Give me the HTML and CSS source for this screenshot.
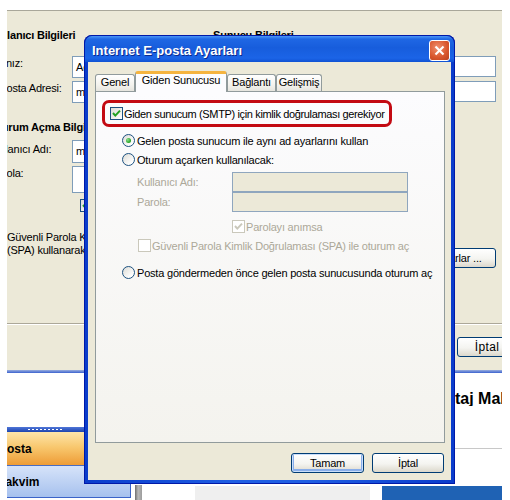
FILE: index.html
```html
<!DOCTYPE html>
<html lang="tr">
<head>
<meta charset="utf-8">
<title>Internet E-posta Ayarları</title>
<link rel="stylesheet" href="styles.css">
</head>
<body>
<div class="screen">
  <div class="acct">
    <div class="acct-main">
      <div class="col-left">
        <div class="group-title">Kullanıcı Bilgileri</div>
        <div class="field f1"><span class="lbl">Adınız:</span><span class="inp">Ad Soyad</span></div>
        <div class="field f2"><span class="lbl">E-posta Adresi:</span><span class="inp">mail@ornek.com</span></div>
        <div class="group-title g2">Oturum Açma Bilgileri</div>
        <div class="field f3"><span class="lbl">Kullanıcı Adı:</span><span class="inp">mail</span></div>
        <div class="field f4"><span class="lbl">Parola:</span><span class="inp"></span></div>
        <div class="remember"><span class="cb"><svg viewBox="0 0 11 11"><polyline points="2,5 4.3,7.6 9,2.6"/></svg></span>Parolayı anımsa</div>
        <div class="spa">Güvenli Parola Kimlik Doğrulaması<br>(SPA) kullanarak oturum açmayı gerektir</div>
      </div>
      <div class="col-right">
        <div class="group-title">Sunucu Bilgileri</div>
        <div class="rinp r1"></div>
        <div class="rinp r2"></div>
        <div class="xpbtn more">Diğer Ayarlar ...</div>
      </div>
    </div>
    <div class="acct-sep"></div>
    <div class="acct-foot"><div class="xpbtn cancel-bg">İptal</div></div>
  </div>
  <div class="band"></div>
  <div class="lower">
    <div class="nav">
      <div class="nav-grip"><span class="dots"></span></div>
      <div class="nav-item posta"><span>Posta</span></div>
      <div class="nav-item takvim"><span>Takvim</span></div>
    </div>
    <div class="sb"></div>
    <div class="reading">
      <div class="rhead">taj Mahallesi</div>
      <div class="rline"></div>
      <div class="tiles"><div class="tile1"></div><div class="tile2"></div></div>
    </div>
  </div>

  <div class="dialog">
    <div class="titlebar">
      <div class="title">Internet E-posta Ayarları</div>
      <div class="close"><svg viewBox="0 0 11 11"><line x1="1.5" y1="1.5" x2="9.5" y2="9.5"/><line x1="9.5" y1="1.5" x2="1.5" y2="9.5"/></svg></div>
    </div>
    <div class="dbody">
      <div class="tabs">
        <div class="tab t1">Genel</div>
        <div class="tab sel t2">Giden Sunucusu</div>
        <div class="tab t3">Bağlantı</div>
        <div class="tab t4">Gelişmiş</div>
      </div>
      <div class="panel">
        <div class="hl">
          <span class="cb"><svg viewBox="0 0 11 11"><polyline points="2,5 4.3,7.6 9,2.6"/></svg></span>
          <span class="hl-text">Giden sunucum (SMTP) için kimlik doğrulaması gerekiyor</span>
        </div>
        <div class="opt o1"><span class="rb on"></span><span class="opt-text">Gelen posta sunucum ile aynı ad ayarlarını kullan</span></div>
        <div class="opt"><span class="rb"></span><span class="opt-text">Oturum açarken kullanılacak:</span></div>
        <div class="creds">
          <span>Kullanıcı Adı:</span><span class="dinp"></span>
          <span>Parola:</span><span class="dinp"></span>
        </div>
        <div class="dopt d1"><span class="cb dis"><svg viewBox="0 0 11 11"><polyline points="2,5 4.3,7.6 9,2.6"/></svg></span><span class="opt-text">Parolayı anımsa</span></div>
        <div class="dopt d2"><span class="cb dis"></span><span class="opt-text">Güvenli Parola Kimlik Doğrulaması (SPA) ile oturum aç</span></div>
        <div class="opt o3"><span class="rb"></span><span class="opt-text">Posta göndermeden önce gelen posta sunucusunda oturum aç</span></div>
      </div>
      <div class="dbuttons">
        <div class="xpbtn def">Tamam</div>
        <div class="xpbtn">İptal</div>
      </div>
    </div>
  </div>
</div>
</body>
</html>
```

FILE: styles.css
```css
body {
  margin: 0;
  background: #fff;
  font-family: "Liberation Sans", Arial, sans-serif;
  font-size: 11px;
  letter-spacing: -0.2px;
  color: #000;
}
.screen {
  position: relative;
  width: 510px;
  height: 500px;
  overflow: hidden;
}

/* ---------- background account window ---------- */
.acct {
  box-sizing: border-box;
  margin: 10px 8px 0 7px;
  height: 360px;
  border-top: 1px solid #A9A79A;
  background: #ECE9D8;
  overflow: hidden;
  display: flex;
  flex-direction: column;
}
.acct-main {
  height: 312px;
  display: grid;
  grid-template-columns: 206px 1fr;
}
.col-left {
  margin-left: -17px;
  padding-top: 17px;
}
.group-title {
  font-weight: bold;
  line-height: 14px;
  white-space: nowrap;
}
.field {
  display: grid;
  grid-template-columns: 82px 128px;
  align-items: start;
  line-height: 14px;
  white-space: nowrap;
}
.f1 { margin-top: 14px; }
.f2 { margin-top: 3px; }
.g2 { margin-top: 17px; }
.f3 { margin-top: 6px; }
.f3 .lbl { padding-top: 2px; }
.f4 { margin-top: 3px; }
.inp {
  box-sizing: border-box;
  height: 22px;
  border: 1px solid #7F9DB9;
  background: #fff;
  padding: 3px;
  overflow: hidden;
}
.f3 .inp { height: 23px; }
.f4 .inp { height: 27px; }
.remember {
  margin: 6px 0 0 90px;
  display: flex;
  align-items: center;
  gap: 3px;
  height: 13px;
  white-space: nowrap;
}
.spa {
  margin: 19px 0 0 17px;
  line-height: 13px;
  white-space: nowrap;
}
.col-right { padding-top: 17px; white-space: nowrap; }
.rinp {
  box-sizing: border-box;
  margin-left: 127px;
  width: 156px;
  height: 21px;
  border: 1px solid #7F9DB9;
  background: #fff;
}
.r1 { margin-top: 14px; }
.r2 { margin-top: 4px; }
.more {
  margin: 146px 0 0 182px;
  width: 101px;
}
.acct-sep {
  border-top: 1px solid #ACA899;
  border-bottom: 1px solid #fff;
}
.acct-foot {
  display: flex;
  justify-content: flex-end;
  padding-top: 12px;
}
.cancel-bg {
  width: 60px;
  margin-right: -15px;
  font-size: 12px;
  letter-spacing: 0.4px;
}
.band {
  margin: 0 8px 0 7px;
  height: 3px;
  background: linear-gradient(#9AAEDD, #3B62CF);
}

/* XP buttons */
.xpbtn {
  box-sizing: border-box;
  height: 20px;
  border: 1px solid #003C74;
  border-radius: 3px;
  background: linear-gradient(#FFFFFF, #F4F4F0 55%, #DCD8CC);
  display: flex;
  align-items: center;
  justify-content: center;
  white-space: nowrap;
  line-height: 14px;
}

/* ---------- lower Outlook area ---------- */
.lower {
  display: flex;
  height: 127px;
  margin-right: 8px;
}
.nav {
  margin-left: 7px;
  width: 124px;
  padding-top: 54px;
  overflow: hidden;
  flex: none;
}
.nav-grip {
  height: 5px;
  background: linear-gradient(#4F76D8, #1D44AE);
  display: flex;
  align-items: center;
}
.dots {
  margin-left: 21px;
  width: 36px;
  height: 1px;
  background: repeating-linear-gradient(90deg, #fff 0 2px, transparent 2px 4px);
}
.nav-item {
  display: flex;
  align-items: center;
  font-weight: bold;
  font-size: 12px;
  letter-spacing: 0;
  white-space: nowrap;
}
.nav-item span { margin-left: -8px; }
.posta {
  height: 33px;
  background: linear-gradient(#FDE5AA, #F8C86F 45%, #EE9C36);
  border-bottom: 1px solid #4A6CC0;
}
.takvim {
  height: 31px;
  background: linear-gradient(#D6E3F9, #A6C1EE);
  border-right: 1px solid #3A63C8;
  border-bottom: 1px solid #3A63C8;
}
.sb {
  margin: 112px 0 0 4px;
  width: 7px;
  background: linear-gradient(90deg, #6E6E6E, #B8B8B8 45%, #9C9C9C);
  flex: none;
}
.reading {
  flex: 1;
  display: flex;
  flex-direction: column;
  min-width: 0;
}
.rhead {
  margin: 18px 0 0 313px;
  font-weight: bold;
  font-size: 16px;
  line-height: 16px;
  letter-spacing: 0;
  white-space: nowrap;
  overflow: hidden;
}
.rline {
  margin: 42px 0 0 313px;
  border-top: 1px solid #C8C8C8;
}
.tiles {
  display: flex;
  margin-top: 37px;
  height: 14px;
}
.tile1 {
  margin-left: 53px;
  width: 175px;
  background: #EFEFEF;
}
.tile2 {
  margin-left: 12px;
  flex: 1;
  background: #1F62B4;
}

/* ---------- dialog ---------- */
.dialog {
  position: absolute;
  left: 84px;
  top: 35px;
  width: 371px;
  height: 449px;
  box-sizing: border-box;
  border: 1px solid #0019A8;
  border-top: none;
  border-radius: 8px 8px 0 0;
  background: linear-gradient(90deg, #0A3CCB, #1F5EE3 40%, #1F5EE3 60%, #0A3CCB);
  padding: 0 3px 3px;
  display: flex;
  flex-direction: column;
}
.titlebar {
  box-sizing: border-box;
  height: 27px;
  margin: 0 -4px;
  border-radius: 8px 8px 0 0;
  border: 1px solid #0019A8;
  border-bottom: none;
  background: linear-gradient(#4A96F7 0%, #1F67E4 12%, #175DDC 45%, #1B64E7 85%, #1052D3 100%);
  display: flex;
  align-items: center;
  padding: 3px 4px 0 7px;
}
.title {
  flex: 1;
  color: #fff;
  font-weight: bold;
  font-size: 13px;
  letter-spacing: 0;
  text-shadow: 1px 1px 0 #0B2A8F;
  white-space: nowrap;
}
.close {
  box-sizing: border-box;
  width: 21px;
  height: 21px;
  border: 1px solid #fff;
  border-radius: 3px;
  background: radial-gradient(circle at 40% 35%, #F0906E, #D8552C 60%, #B8401E);
  display: flex;
  align-items: center;
  justify-content: center;
}
.close svg {
  width: 11px;
  height: 11px;
  stroke: #fff;
  stroke-width: 2.2;
}
.dbody {
  flex: 1;
  background: #ECE9D8;
  padding: 9px 6px 0 7px;
  display: flex;
  flex-direction: column;
}
.tabs {
  display: flex;
  align-items: flex-end;
  height: 21px;
  margin-bottom: -1px;
  position: relative;
  z-index: 1;
}
.tab {
  box-sizing: border-box;
  height: 17px;
  margin-bottom: 1px;
  border: 1px solid #919B9C;
  border-bottom: none;
  border-radius: 3px 3px 0 0;
  background: linear-gradient(#FFFFFF, #F4F3EE 60%, #E6E5DE);
  line-height: 15px;
  text-align: center;
  white-space: nowrap;
}
.tab.sel {
  height: 21px;
  margin-bottom: 0;
  border-top: 3px solid #F5B43F;
  background: #FCFCFE;
  line-height: 13px;
}
.t1 { width: 40px; }
.t2 { width: 92px; }
.t3 { width: 49px; }
.t4 { width: 46px; }
.panel {
  box-sizing: border-box;
  height: 352px;
  border: 1px solid #919B9C;
  background: linear-gradient(#FCFCFE, #F4F3EE);
}
.dbuttons {
  display: flex;
  justify-content: flex-end;
  gap: 8px;
  margin-top: 10px;
  padding-right: 1px;
}
.dbuttons .xpbtn { width: 72px; }
.dbuttons .def {
  width: 73px;
  box-shadow: inset 0 0 0 1px #C9DEFA, inset 0 -1px 0 2px #89AEEA;
}

.hl {
  box-sizing: border-box;
  margin: 8px 0 0 6px;
  width: 290px;
  height: 27px;
  border: 3px solid #C30A12;
  border-radius: 7px;
  display: flex;
  align-items: center;
  padding-left: 5px;
  white-space: nowrap;
}
.hl-text {
  margin-left: 1px;
  letter-spacing: -0.36px;
}

.cb {
  box-sizing: border-box;
  width: 13px;
  height: 13px;
  border: 1px solid #1C5180;
  background: linear-gradient(135deg, #DCDCD7, #fff);
  display: inline-flex;
  flex: none;
}
.cb svg {
  width: 11px;
  height: 11px;
  fill: none;
  stroke: #21A121;
  stroke-width: 2;
}
.cb.dis {
  border-color: #CAC8BB;
  background: #fff;
}
.cb.dis svg { stroke: #CAC8BB; }

.rb {
  box-sizing: border-box;
  width: 13px;
  height: 13px;
  border-radius: 50%;
  border: 1px solid #1C5180;
  background: linear-gradient(135deg, #DCDBD5, #fff 80%);
  flex: none;
  display: flex;
  align-items: center;
  justify-content: center;
}
.rb.on::after {
  content: "";
  width: 5px;
  height: 5px;
  border-radius: 50%;
  background: radial-gradient(circle at 35% 35%, #8CE08C, #21A121 70%);
}
.opt {
  display: flex;
  align-items: center;
  height: 19px;
  margin-left: 26px;
  white-space: nowrap;
}
.opt-text { margin-left: 2px; }
.o1 { margin-top: 4px; }
.o3 { margin-top: 8px; }
.creds {
  display: grid;
  grid-template-columns: 95px 176px;
  grid-auto-rows: 20px;
  align-items: center;
  margin: 3px 0 0 41px;
  color: #ACA899;
}
.dinp {
  box-sizing: border-box;
  height: 20px;
  border: 1px solid #8FA6BE;
  background: #ECE9D8;
}
.dopt {
  display: flex;
  align-items: center;
  height: 19px;
  color: #ACA899;
  white-space: nowrap;
}
.dopt .opt-text { margin-left: 1px; }
.d1 { margin: 5px 0 0 136px; }
.d2 { margin-left: 42px; }
```
